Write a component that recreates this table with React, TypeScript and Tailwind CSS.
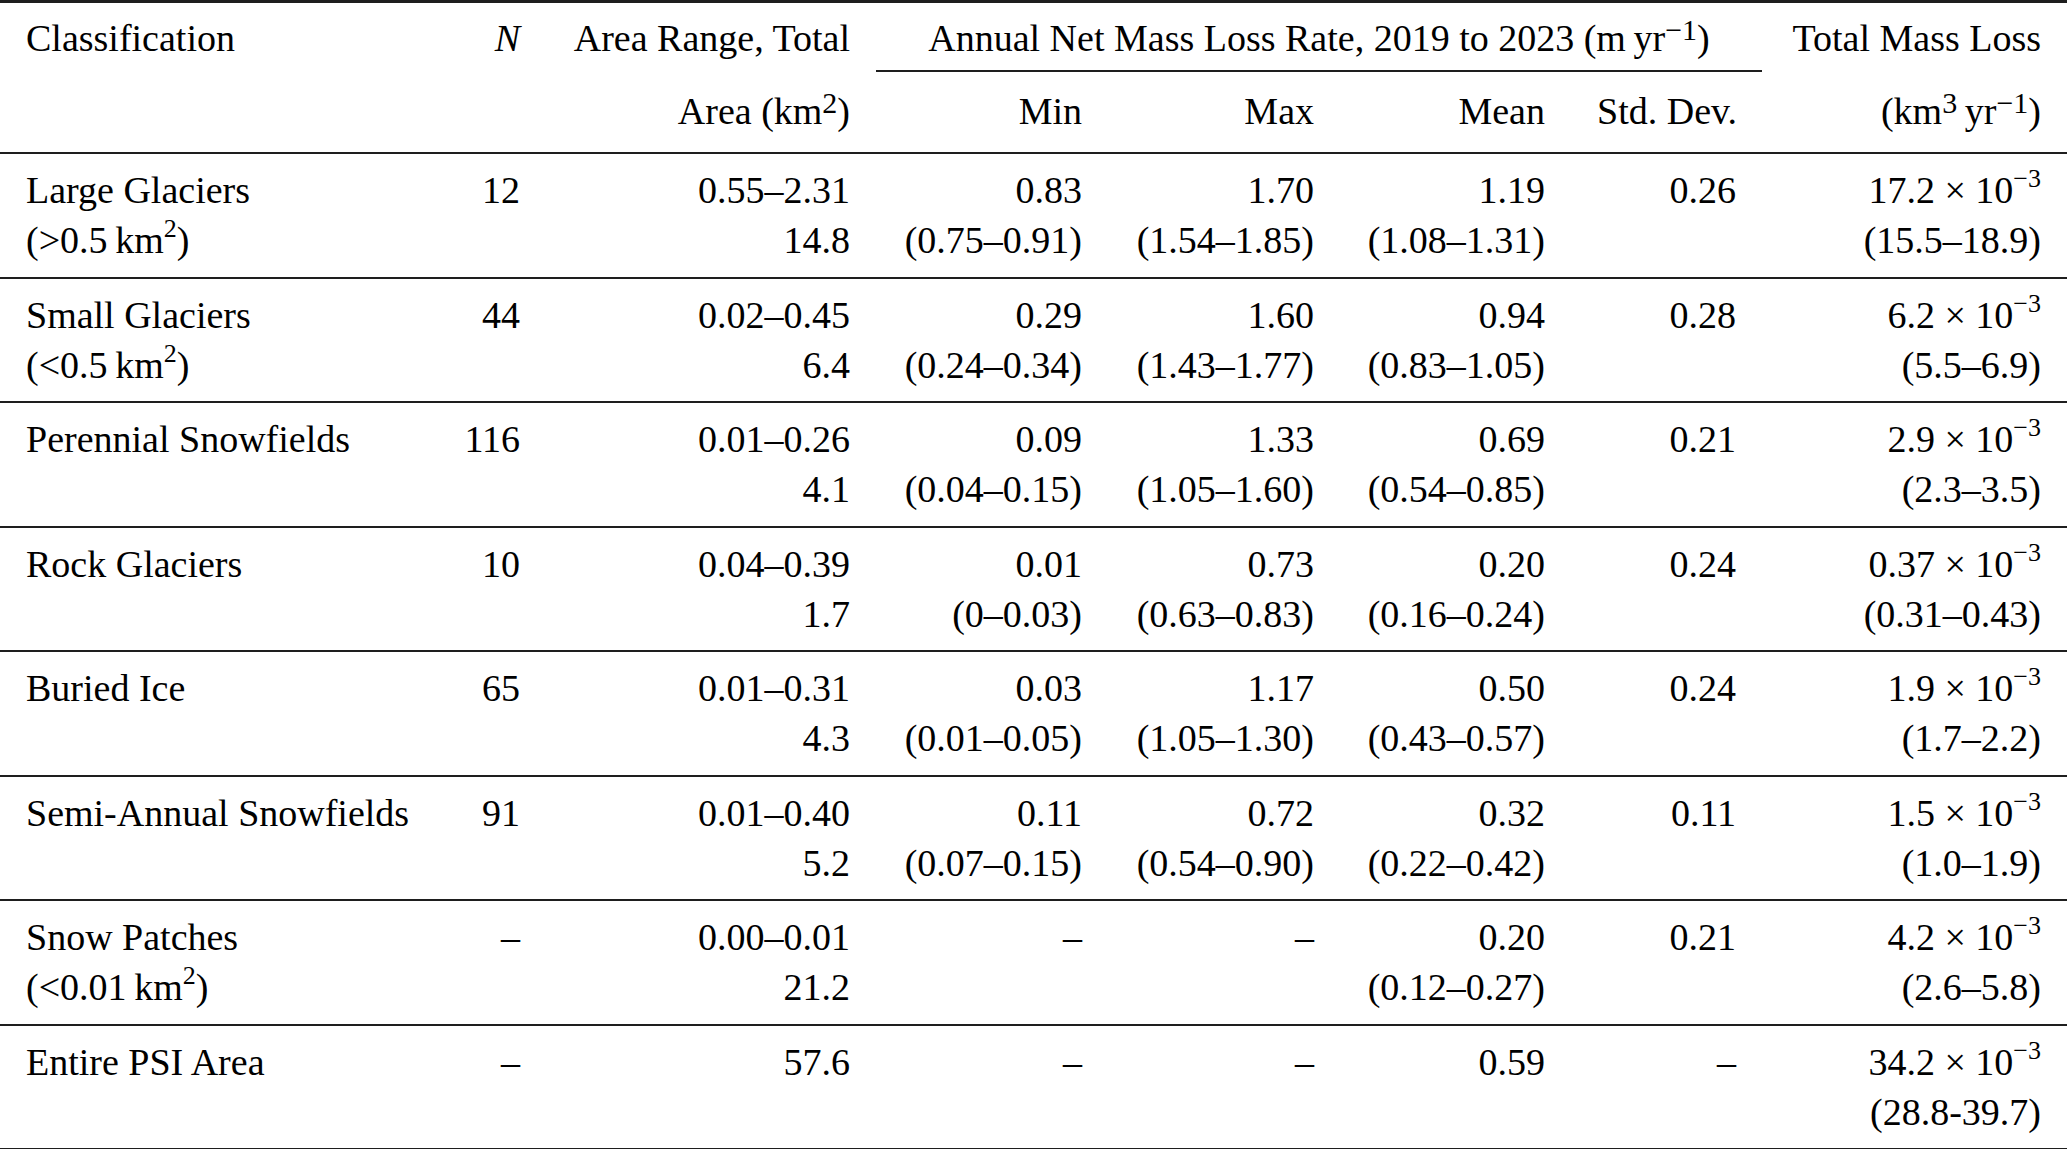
import React from "react";

type Row = {
  name: React.ReactNode[];
  n: string;
  area: string[];
  min: string[];
  max: string[];
  mean: string[];
  sd: string;
  total: string[];
};

// superscripts: header ones are a little bigger than the ones in the body
function Sup({ children, head }: { children: React.ReactNode; head?: boolean }) {
  return (
    <sup className={head ? "text-[30px] -top-[11px]" : "text-[26px] -top-[16px]"}>
      {children}
    </sup>
  );
}

const km2 = (sign: string, v: string) => (
  <>
    ({sign}
    {v}
    {"\u2009"}km
    <Sup>2</Sup>)
  </>
);

const rows: Row[] = [
  {
    name: ["Large Glaciers", km2(">", "0.5")],
    n: "12",
    area: ["0.55–2.31", "14.8"],
    min: ["0.83", "(0.75–0.91)"],
    max: ["1.70", "(1.54–1.85)"],
    mean: ["1.19", "(1.08–1.31)"],
    sd: "0.26",
    total: ["17.2", "(15.5–18.9)"],
  },
  {
    name: ["Small Glaciers", km2("<", "0.5")],
    n: "44",
    area: ["0.02–0.45", "6.4"],
    min: ["0.29", "(0.24–0.34)"],
    max: ["1.60", "(1.43–1.77)"],
    mean: ["0.94", "(0.83–1.05)"],
    sd: "0.28",
    total: ["6.2", "(5.5–6.9)"],
  },
  {
    name: ["Perennial Snowfields"],
    n: "116",
    area: ["0.01–0.26", "4.1"],
    min: ["0.09", "(0.04–0.15)"],
    max: ["1.33", "(1.05–1.60)"],
    mean: ["0.69", "(0.54–0.85)"],
    sd: "0.21",
    total: ["2.9", "(2.3–3.5)"],
  },
  {
    name: ["Rock Glaciers"],
    n: "10",
    area: ["0.04–0.39", "1.7"],
    min: ["0.01", "(0–0.03)"],
    max: ["0.73", "(0.63–0.83)"],
    mean: ["0.20", "(0.16–0.24)"],
    sd: "0.24",
    total: ["0.37", "(0.31–0.43)"],
  },
  {
    name: ["Buried Ice"],
    n: "65",
    area: ["0.01–0.31", "4.3"],
    min: ["0.03", "(0.01–0.05)"],
    max: ["1.17", "(1.05–1.30)"],
    mean: ["0.50", "(0.43–0.57)"],
    sd: "0.24",
    total: ["1.9", "(1.7–2.2)"],
  },
  {
    name: ["Semi-Annual Snowfields"],
    n: "91",
    area: ["0.01–0.40", "5.2"],
    min: ["0.11", "(0.07–0.15)"],
    max: ["0.72", "(0.54–0.90)"],
    mean: ["0.32", "(0.22–0.42)"],
    sd: "0.11",
    total: ["1.5", "(1.0–1.9)"],
  },
  {
    name: ["Snow Patches", km2("<", "0.01")],
    n: "–",
    area: ["0.00–0.01", "21.2"],
    min: ["–"],
    max: ["–"],
    mean: ["0.20", "(0.12–0.27)"],
    sd: "0.21",
    total: ["4.2", "(2.6–5.8)"],
  },
  {
    name: ["Entire PSI Area"],
    n: "–",
    area: ["57.6"],
    min: ["–"],
    max: ["–"],
    mean: ["0.59"],
    sd: "–",
    total: ["34.2", "(28.8-39.7)"],
  },
];

function Cell({ lines, left }: { lines: React.ReactNode[]; left?: boolean }) {
  return (
    <div className={left ? "px-[26px] text-left" : "px-[26px] text-right"}>
      {lines.map((l, i) => (
        <div key={i} className="h-[50px] leading-[50px]">
          {l}
        </div>
      ))}
    </div>
  );
}

const cols = "grid grid-cols-[437px_109px_330px_232px_232px_231px_191px_305px]";

export default function App() {
  return (
    <div className="min-h-screen bg-white">
      <div className="w-[2067px] border-t-[3px] border-[#1e1e1e] font-['Liberation_Serif','Times_New_Roman',serif] text-[38px] text-black whitespace-nowrap">
        {/* header */}
        <div
          className={`${cols} grid-rows-[50px_23px_50px] pt-[10px] pb-[16px] border-b-2 border-[#1e1e1e] leading-[50px]`}
        >
          <div className="row-start-1 col-start-1 px-[26px]">Classification</div>
          <div className="row-start-1 col-start-2 px-[26px] text-right italic">N</div>
          <div className="row-start-1 col-start-3 px-[26px] text-right">Area Range, Total</div>
          <div className="row-start-1 col-start-4 col-span-4 px-[26px] text-center">
            Annual Net Mass Loss Rate, 2019 to 2023 (m{"\u2009"}yr
            <Sup head>−1</Sup>)
          </div>
          <div className="row-start-1 col-start-8 px-[26px] text-right">Total Mass Loss</div>

          <div className="row-start-2 col-start-4 col-span-4 pt-[7px]">
            <div className="h-[2px] bg-[#1e1e1e]" />
          </div>

          <div className="row-start-3 col-start-3 px-[26px] text-right">
            Area (km<Sup head>2</Sup>)
          </div>
          <div className="row-start-3 col-start-4 px-[26px] text-right">Min</div>
          <div className="row-start-3 col-start-5 px-[26px] text-right">Max</div>
          <div className="row-start-3 col-start-6 px-[26px] text-right">Mean</div>
          <div className="row-start-3 col-start-7 px-[26px] text-right">Std. Dev.</div>
          <div className="row-start-3 col-start-8 px-[26px] text-right">
            (km<Sup head>3</Sup>
            {"\u2009"}yr<Sup head>−1</Sup>)
          </div>
        </div>

        {/* body */}
        {rows.map((r, i) => (
          <div
            key={i}
            className={
              i === rows.length - 1
                ? `${cols} pt-[11px] pb-[11.5px] border-b-[3px] border-[#1e1e1e]`
                : `${cols} pt-[11px] pb-[11.5px] border-b-2 border-[#1e1e1e]`
            }
          >
            <Cell left lines={r.name} />
            <Cell lines={[r.n]} />
            <Cell lines={r.area} />
            <Cell lines={r.min} />
            <Cell lines={r.max} />
            <Cell lines={r.mean} />
            <Cell lines={[r.sd]} />
            <Cell
              lines={[
                <>
                  {r.total[0]} × 10<Sup>−3</Sup>
                </>,
                r.total[1],
              ]}
            />
          </div>
        ))}
      </div>
    </div>
  );
}
